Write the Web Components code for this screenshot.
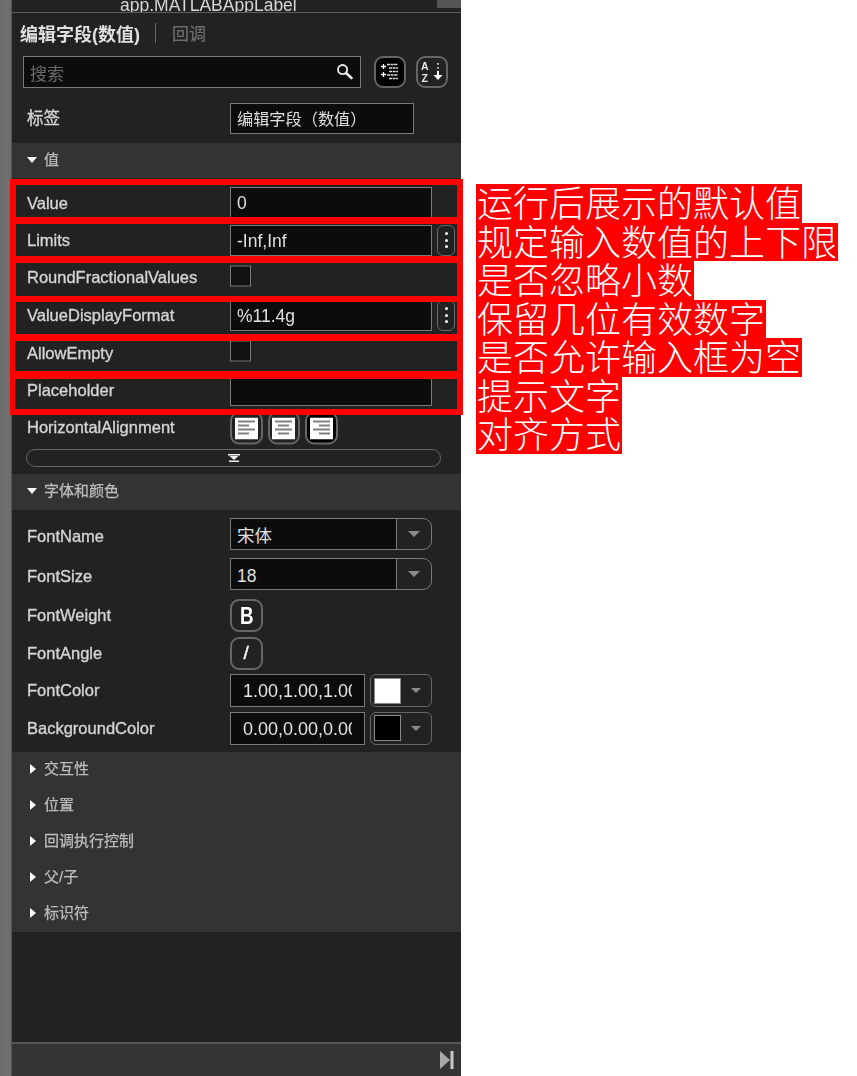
<!DOCTYPE html>
<html lang="zh-CN">
<head>
<meta charset="utf-8">
<title>编辑字段(数值)</title>
<style>
html,body{margin:0;padding:0;background:#fff;width:857px;height:1076px;overflow:hidden}
body{font-family:"Liberation Sans","Noto Sans CJK SC",sans-serif}
svg{display:block}
</style>
</head>
<body>
<x-page>
  <x-panel slot="panel">
    <x-topbar>app.MATLABAppLabel</x-topbar>
    <x-tabs><span>编辑字段(数值)</span><span slot="other">回调</span></x-tabs>
    <x-search>
      <span>搜索</span>
      <svg slot="icon" width="18" height="18" viewBox="0 0 18 18"><circle cx="6.6" cy="6.6" r="4.6" fill="none" stroke="#eee" stroke-width="1.8"/><path d="M10 10l5.5 5" stroke="#eee" stroke-width="2.6" stroke-linecap="round"/></svg>
      <x-btn slot="btn1" style="background:#000">
        <svg width="20" height="18" viewBox="0 0 20 18"><path d="M1 3.500h5M3.500 1v5M1 11.500h5M3.500 9v5" stroke="#fff" stroke-width="1.300"/><path d="M7 1.500h11M9 5h9M9 8.500h9M7 12h11M9 15.500h9" stroke="#ddd" stroke-width="1.400" stroke-dasharray="3 .6"/></svg>
      </x-btn>
      <x-btn slot="btn2">
        <svg width="24" height="24" viewBox="0 0 24 24"><text x="1" y="10" font-family="Liberation Sans" font-size="10.500" font-weight="bold" fill="#e8e8e8">A</text><text x="1.500" y="22" font-family="Liberation Sans" font-size="10.500" font-weight="bold" fill="#e8e8e8">Z</text><path d="M18 3v1.800M18 7v1.800" stroke="#ddd" stroke-width="1.600"/><path d="M18 11v5" stroke="#fff" stroke-width="2"/><path d="M13.500 15h9L18 20z" fill="#fff"/></svg>
      </x-btn>
    </x-search>
    <x-row style="--h:31px;margin-top:15px;--lh:-2px"><span slot="label">标签</span><x-field style="width:184px;font-size:16.200px">编辑字段（数值）</x-field></x-row>
    <x-section style="margin-top:9px;height:35px;--tx:-2px" open>值</x-section>
    <x-group style="padding-top:5.75px">
      <x-row style="--lh:0.500px"><span slot="label">Value</span><x-field>0</x-field></x-row>
      <x-row><span slot="label">Limits</span><x-field>-Inf,Inf</x-field><x-dots></x-dots></x-row>
      <x-row><span slot="label">RoundFractionalValues</span><x-check></x-check></x-row>
      <x-row><span slot="label">ValueDisplayFormat</span><x-field>%11.4g</x-field><x-dots></x-dots></x-row>
      <x-row style="--lh:0.500px"><span slot="label">AllowEmpty</span><x-check></x-check></x-row>
      <x-row><span slot="label">Placeholder</span><x-field></x-field></x-row>
      <x-row><span slot="label">HorizontalAlignment</span>
        <x-align>
          <x-btn><svg width="23" height="22" viewBox="0 0 23 22"><rect width="23" height="22" fill="#fff"/><path d="M3 4h17M3 8h11M3 12h17M3 16h11" stroke="#808080" stroke-width="2"/></svg></x-btn>
          <x-btn><svg width="23" height="22" viewBox="0 0 23 22"><rect width="23" height="22" fill="#fff"/><path d="M3 4h17M6 8h11M3 12h17M6 16h11" stroke="#808080" stroke-width="2"/></svg></x-btn>
          <x-btn style="background:#000"><svg width="23" height="22" viewBox="0 0 23 22"><rect width="23" height="22" fill="#fff"/><path d="M3 4h17M9 8h11M3 12h17M9 16h11" stroke="#808080" stroke-width="2"/></svg></x-btn>
        </x-align>
      </x-row>
      <x-expand></x-expand>
    </x-group>
    <x-section style="margin-top:7px;height:36px" open>字体和颜色</x-section>
    <x-group style="padding:4px 0 5px">
      <x-row style="--h:40px;--lh:2px"><span slot="label">FontName</span><x-combo style="--pt:0px">宋体</x-combo></x-row>
      <x-row style="--h:40px;--lh:2px"><span slot="label">FontSize</span><x-combo style="--pt:4px">18</x-combo></x-row>
      <x-row style="margin-top:3px;--lh:-0.500px"><span slot="label">FontWeight</span><x-btn style="font:bold 24px 'Liberation Sans',sans-serif;color:#fff"><x-squeeze>B</x-squeeze></x-btn></x-row>
      <x-row><span slot="label">FontAngle</span><x-btn style="font:19px 'Liberation Sans',sans-serif;color:#fff;-webkit-text-stroke:.4px #fff">/</x-btn></x-row>
      <x-row><span slot="label">FontColor</span><x-color style="--c:#fff">1.00,1.00,1.00</x-color></x-row>
      <x-row><span slot="label">BackgroundColor</span><x-color style="--c:#000">0.00,0.00,0.00</x-color></x-row>
    </x-group>
    <x-section>交互性</x-section>
    <x-section>位置</x-section>
    <x-section>回调执行控制</x-section>
    <x-section>父/子</x-section>
    <x-section>标识符</x-section>
    <x-footer></x-footer>
    <x-frames slot="overlay">
      <x-frame style="height:32px"></x-frame>
      <x-frame style="height:32px"></x-frame>
      <x-frame style="height:32.500px"></x-frame>
      <x-frame style="height:32px;margin-top:-5.500px"></x-frame>
      <x-frame style="height:30px;--l:5px"></x-frame>
      <x-frame style="height:30px;--l:5px;margin-top:-4px"></x-frame>
    </x-frames>
  </x-panel>
  <x-notes slot="notes">
    <x-note>运行后展示的默认值</x-note>
    <x-note>规定输入数值的上下限</x-note>
    <x-note>是否忽略小数</x-note>
    <x-note>保留几位有效数字</x-note>
    <x-note>是否允许输入框为空</x-note>
    <x-note>提示文字</x-note>
    <x-note>对齐方式</x-note>
  </x-notes>
</x-page>
<script>
const FONT = `"Liberation Sans","Noto Sans CJK SC",sans-serif`;
function def(name, html){
  const t = document.createElement('template');
  t.innerHTML = html;
  customElements.define(name, class extends HTMLElement{
    constructor(){ super(); this.attachShadow({mode:'open'}).appendChild(t.content.cloneNode(true)); }
  });
}
const fieldBox = `box-sizing:border-box;border:1.500px solid #7a7a7a;background:#0c0c0c;`;

def('x-page', `<style>:host{display:flex;width:857px;height:1076px;align-items:flex-start}
</style><slot name="panel"></slot><slot name="notes"></slot>`);

def('x-panel', `<style>
:host{display:block;position:relative;flex:none;width:461px;height:1076px;background:#222}
.wrap{display:flex;height:100%}
.strip{flex:none;width:12px;background:linear-gradient(90deg,#6c6c6c,#707070 85%,#4a4a4a)}
.main{flex:1;min-width:0;display:flex;flex-direction:column;filter:blur(.45px);overflow:hidden}
</style><div class="wrap"><div class="strip"></div><div class="main"><slot></slot></div></div><slot name="overlay"></slot>`);

def('x-topbar', `<style>
:host{display:block;position:relative;flex:none;height:12px;border-bottom:1.500px solid #5c5c5c;overflow:hidden;background:#222;box-sizing:content-box}
.t{display:block;margin:-5px 0 0 108px;font:17.500px/20px ${FONT};color:#d6d6d6;white-space:nowrap}
.thumb{position:absolute;right:0;top:0;width:24px;height:8px;background:#555}
</style><span class="t"><slot></slot></span><div class="thumb"></div>`);

def('x-tabs', `<style>
:host{display:flex;align-items:center;flex:none;height:42px;padding:0 0 3px 8px;box-sizing:border-box;margin-bottom:1px;font:bold 18px ${FONT};color:#e0e0e0}
.sep{width:1px;height:20px;background:#666;margin:0 16px 0 15px}
.o{font-weight:normal;color:#6f6f6f;font-size:17px;-webkit-text-stroke:.2px #6f6f6f}
</style><slot></slot><span class="sep"></span><span class="o"><slot name="other"></slot></span>`);

def('x-search', `<style>
:host{display:flex;flex:none;height:32px;padding-left:11px;align-items:stretch}
.box{${fieldBox}width:338px;display:flex;align-items:center;justify-content:space-between;padding:0 6px 0 6px;font:17px ${FONT};color:#6a6a6a}
.gap1{width:13px}.gap2{width:10px}
::slotted(x-btn){width:32px;height:32px}
</style><div class="box"><span><slot></slot></span><slot name="icon"></slot></div><div class="gap1"></div><slot name="btn1"></slot><div class="gap2"></div><slot name="btn2"></slot>`);

def('x-section', `<style>
:host{display:flex;align-items:center;flex:none;height:36px;box-sizing:border-box;background:#333;padding-left:18px;font:15px ${FONT};color:#bdbdbd;-webkit-text-stroke:.25px #bdbdbd}
.ar{flex:none;width:14px;display:flex;justify-content:flex-start;transform:translateY(-1px)}
.o,.c{display:block}
.o{width:0;height:0;margin-left:-3px;border-left:5px solid transparent;border-right:5px solid transparent;border-top:6px solid #fff}
.c{width:0;height:0;border-top:5px solid transparent;border-bottom:5px solid transparent;border-left:6px solid #fff}
:host([open]) .c{display:none}
:host(:not([open])) .o{display:none}
.tx{position:relative;transform:translateY(var(--tx,-3px))}
</style><span class="ar"><i class="o"></i><i class="c"></i></span><span class="tx"><slot></slot></span>`);

def('x-group', `<style>:host{display:block;flex:none;background:#222}</style><slot></slot>`);

def('x-row', `<style>
:host{display:flex;align-items:center;height:var(--h,37.500px);padding-left:15px;flex:none;box-sizing:border-box}
.l{flex:none;width:203px;font:16.500px ${FONT};color:#d4d4d4;-webkit-text-stroke:.35px #d4d4d4;white-space:nowrap;transform:translateY(var(--lh,0))}
.c{display:flex;align-items:center;gap:5px}
</style><span class="l"><slot name="label"></slot></span><div class="c"><slot></slot></div>`);

def('x-field', `<style>
:host{${fieldBox}display:block;width:202px;height:31px;padding-left:6px;font:17.500px/31px ${FONT};color:#e0e0e0;white-space:nowrap;overflow:hidden;flex:none}
</style><slot></slot>`);

def('x-check', `<style>
:host{${fieldBox}display:block;width:21px;height:21px;flex:none;transform:translateY(-1.500px);background:#111}
</style>`);

def('x-dots', `<style>
:host{display:flex;flex-direction:column;align-items:center;justify-content:space-evenly;box-sizing:border-box;width:18px;height:31px;border:1.500px solid #6a6a6a;border-radius:6px;padding:3px 0;flex:none}
i{width:3px;height:3px;background:#fff;border-radius:50%}
</style><i></i><i></i><i></i>`);

def('x-btn', `<style>
:host{display:flex;align-items:center;justify-content:center;box-sizing:border-box;width:32.500px;height:33px;border:2px solid #666;border-radius:9px;flex:none;overflow:hidden}
</style><slot></slot>`);

def('x-squeeze', `<style>:host{display:inline-block;transform:scaleX(.78)}</style><slot></slot>`);

def('x-align', `<style>:host{display:flex;gap:5px;transform:translateY(.5px)}</style><slot></slot>`);

def('x-expand', `<style>
:host{display:flex;align-items:center;justify-content:center;box-sizing:border-box;width:415px;height:18px;margin:2.750px 0 0 14px;border:1.500px solid #666;border-radius:9px}
svg{display:block}
</style><svg width="12" height="8" viewBox="0 0 12 8"><path d="M0 0h12v1.500H0zM1.500 2h9L6 6zM1 6.500h10V8H1z" fill="#f0f0f0"/></svg>`);

def('x-combo', `<style>
:host{display:flex;box-sizing:border-box;width:202px;height:32px;border:1.500px solid #7a7a7a;border-radius:0 9px 9px 0;overflow:hidden;flex:none;font:17.500px ${FONT};color:#e0e0e0}
.v{flex:none;width:166px;background:#0c0c0c;border-right:1.500px solid #7a7a7a;padding:var(--pt,0) 0 0 6px;display:flex;align-items:center;box-sizing:border-box}
.a{flex:1;display:flex;align-items:center;justify-content:center}
.a i{width:0;height:0;border-left:6.500px solid transparent;border-right:6.500px solid transparent;border-top:6px solid #8a8a8a}
</style><div class="v"><slot></slot></div><div class="a"><i></i></div>`);

def('x-color', `<style>
:host{display:flex;gap:5px;flex:none}
.f{${fieldBox}width:135px;height:33px;padding:0 12px 0 12px;font:18px/32px ${FONT};color:#e4e4e4}
.clip{overflow:hidden;white-space:nowrap;height:100%}
.d{box-sizing:border-box;width:62px;height:33px;border:1.500px solid #666;border-radius:6px;display:flex;align-items:center;padding-left:3px}
.s{box-sizing:border-box;width:27px;height:26px;background:var(--c);border:1.500px solid #8a8a8a;flex:none}
.a{flex:1;display:flex;justify-content:center}
.a i{width:0;height:0;border-left:5.500px solid transparent;border-right:5.500px solid transparent;border-top:5px solid #8a8a8a}
</style><div class="f"><div class="clip"><slot></slot></div></div><div class="d"><div class="s"></div><div class="a"><i></i></div></div>`);

def('x-footer', `<style>
:host{display:flex;flex-direction:column;flex:1;min-height:0}
.s{flex:1;background:#222}
.b{flex:none;height:32px;background:#343434;border-top:2px solid #555;box-sizing:content-box;display:flex;align-items:center;justify-content:flex-end;padding-right:7px}
</style><div class="s"></div><div class="b"><svg width="14" height="18" viewBox="0 0 14 18"><path d="M0 0l10 9-10 9z" fill="#a8a8a8"/><rect x="10.500" width="3" height="18" fill="#c8c8c8"/></svg></div>`);

def('x-frames', `<style>
:host{position:absolute;left:10px;top:179px;width:453px;display:flex;flex-direction:column;pointer-events:none}
::slotted(x-frame:not(:first-child)){margin-top:-5px}
</style><slot></slot>`);

def('x-frame', `<style>
:host{display:block;box-sizing:content-box;border:6px solid #f00;border-left-width:var(--l,6px);flex:none}
</style>`);

def('x-notes', `<style>
:host{display:flex;flex-direction:column;align-items:flex-start;padding:184px 0 0 15px}
</style><slot></slot>`);

def('x-note', `<style>
:host{display:block;height:38.500px;padding:0 1px;background:#f00;color:#fff;font:300 36px/35px "Noto Sans CJK SC",sans-serif;white-space:nowrap}
</style><slot></slot>`);
</script>
</body>
</html>
